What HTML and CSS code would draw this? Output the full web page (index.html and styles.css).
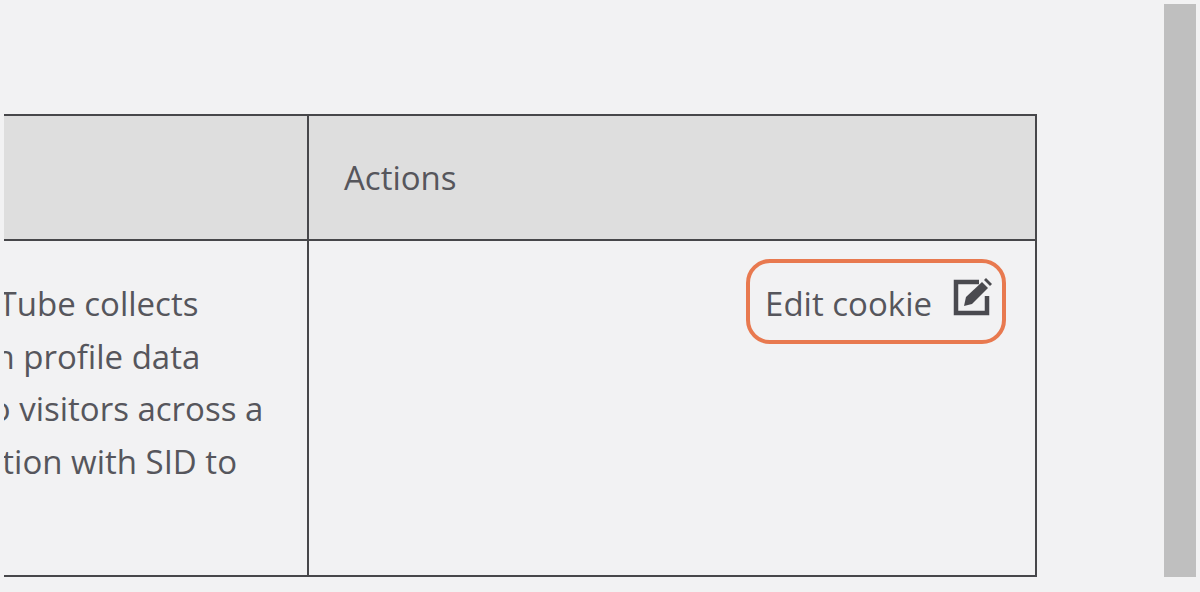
FILE: index.html
```html
<!DOCTYPE html>
<html lang="en">
<head>
    <meta charset="UTF-8">
    <title>Cookies</title>
    <link rel="stylesheet" href="styles.css">
</head>
<body>
    <div class="page">
        <table class="cookie-table">
            <colgroup>
                <col class="col-desc">
                <col class="col-actions">
            </colgroup>
            <thead>
                <tr>
                    <th></th>
                    <th>Actions</th>
                </tr>
            </thead>
            <tbody>
                <tr>
                    <td class="desc">
                        <div class="line line-1">YouTube collects</div>
                        <div class="line line-2">own profile data</div>
                        <div class="line line-3">to visitors across a</div>
                        <div class="line line-4">combination with SID to</div>
                    </td>
                    <td class="actions">
                        <a class="edit-btn" href="#">
                            <span class="edit-label">Edit cookie</span>
                            <svg class="edit-icon" viewBox="0 0 40 40" width="40" height="40">
                                <path d="M26 5H3v31h31V19" fill="none" stroke="#4a4a4f" stroke-width="4.5"/>
                                <path d="M13 20 29 5l6 6-16 16-8 2z" fill="#4a4a4f"/>
                                <path d="M31 3l2-2 6 6-2 2z" fill="#4a4a4f"/>
                            </svg>
                        </a>
                    </td>
                </tr>
            </tbody>
        </table>
        <div class="scrollbar"></div>
    </div>
</body>
</html>
```
FILE: styles.css
```css
* {
    margin: 0;
    padding: 0;
    box-sizing: border-box;
}

body {
    font-family: 'Open Sans', sans-serif;
    background: #f2f2f3;
    color: #56565c;
    height: 592px;
    overflow: hidden;
}

.page {
    display: flex;
    align-items: flex-start;
    padding: 4px 4px 0 4px;
}

.cookie-table {
    width: 1033px;
    margin-top: 110px;
    border-collapse: separate;
    border-spacing: 0;
    table-layout: fixed;
    font-size: 33px;
}

.col-desc {
    width: 305px;
}

.cookie-table th {
    height: 127px;
    background: #dedede;
    border-top: 2px solid #47474a;
    border-bottom: 2px solid #47474a;
    border-right: 2px solid #47474a;
    padding-left: 35px;
    font-weight: 400;
    text-align: left;
}

.cookie-table td {
    height: 336px;
    vertical-align: top;
    border-bottom: 2px solid #47474a;
    border-right: 2px solid #47474a;
}

.desc {
    overflow: hidden;
    padding-top: 37px;
}

.line {
    white-space: nowrap;
    line-height: 52.6px;
}

.line-1 {
    margin-left: -64px;
}

.line-2 {
    margin-left: -55px;
}

.line-3 {
    margin-left: -25px;
}

.line-4 {
    margin-left: -135px;
}

.actions {
    text-align: right;
    padding: 18px 29px 0 0;
}

.edit-btn {
    display: inline-flex;
    align-items: center;
    gap: 21px;
    height: 85px;
    padding: 0 9px 0 15px;
    border: 4px solid #e8794f;
    border-radius: 24px;
    color: inherit;
    text-decoration: none;
}

.edit-label {
    padding-top: 4px;
}

.edit-icon {
    margin-top: -10px;
}

.scrollbar {
    width: 32px;
    height: 573px;
    margin-left: 127px;
    background: #bfbfbf;
}
```
